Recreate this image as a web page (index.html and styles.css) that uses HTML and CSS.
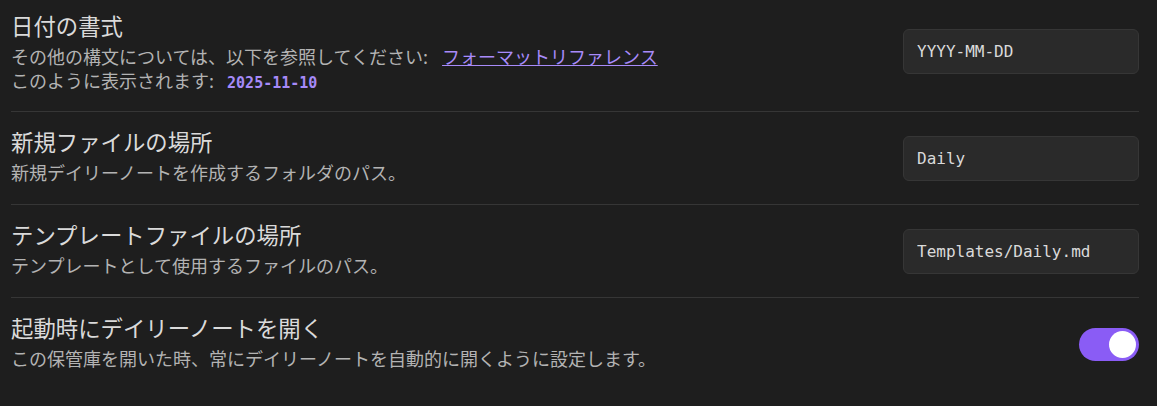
FILE: index.html
```html
<!DOCTYPE html>
<html lang="ja">
<head>
  <meta charset="UTF-8" />
  <meta name="viewport" content="width=device-width, initial-scale=1.0" />
  <title>デイリーノート設定</title>
  <link rel="stylesheet" href="styles.css">
</head>
<body>
  <div class="settings">
    <div class="setting-item">
      <div class="setting-info">
        <div class="setting-name">日付の書式</div>
        <div class="setting-desc">
          その他の構文については、以下を参照してください: <a href="#" class="link">フォーマットリファレンス</a><br>
          このように表示されます: <b class="preview">2025-11-10</b>
        </div>
      </div>
      <input type="text" class="text-input setting-control" value="YYYY-MM-DD" />
    </div>

    <div class="setting-item">
      <div class="setting-info">
        <div class="setting-name">新規ファイルの場所</div>
        <div class="setting-desc">新規デイリーノートを作成するフォルダのパス。</div>
      </div>
      <input type="text" class="text-input setting-control" value="Daily" />
    </div>

    <div class="setting-item">
      <div class="setting-info">
        <div class="setting-name">テンプレートファイルの場所</div>
        <div class="setting-desc">テンプレートとして使用するファイルのパス。</div>
      </div>
      <input type="text" class="text-input setting-control" value="Templates/Daily.md" />
    </div>

    <div class="setting-item">
      <div class="setting-info">
        <div class="setting-name">起動時にデイリーノートを開く</div>
        <div class="setting-desc">この保管庫を開いた時、常にデイリーノートを自動的に開くように設定します。</div>
      </div>
      <div class="toggle is-enabled setting-control"><span class="knob"></span></div>
    </div>
  </div>
</body>
</html>
```

FILE: styles.css
```css
body {
  margin: 0;
  background-color: #1e1e1e;
  color: #dadada;
  font-family: "Noto Sans CJK JP", "Noto Sans", sans-serif;
}

.settings {
  padding: 0 18px 0 11px;
}

.setting-item {
  display: flex;
  align-items: center;
  justify-content: space-between;
  padding: 14px 0 20px;
  border-top: 1px solid #363636;
}

.setting-item .setting-control {
  margin-top: 6px;
}

.setting-item:first-child {
  border-top: none;
  padding: 10px 0 19px;
}

.setting-item:first-child .setting-control {
  margin-top: 0;
}

.setting-name {
  font-size: 22.4px;
  line-height: 30px;
  margin-bottom: 4px;
}

.setting-desc {
  font-size: 18px;
  line-height: 24px;
  color: #b3b3b3;
}

.link {
  color: #a88bfa;
  text-decoration: underline;
  margin-left: 10px;
}

.preview {
  font-family: "DejaVu Sans Mono", "Liberation Mono", monospace;
  font-size: 15px;
  line-height: 1;
  color: #a68af9;
  margin-left: 9px;
}

.text-input {
  box-sizing: border-box;
  width: 236px;
  height: 45px;
  padding: 0 13px;
  background-color: #2a2a2a;
  border: 1px solid #363636;
  border-radius: 6px;
  color: #dadada;
  font-family: "DejaVu Sans Mono", "Liberation Mono", monospace;
  font-size: 16px;
  outline: none;
}

.toggle {
  box-sizing: border-box;
  width: 60px;
  height: 33px;
  border-radius: 17px;
  background-color: #3f3f3f;
  padding: 3px;
  display: flex;
}

.toggle.is-enabled {
  background-color: #8a5cf5;
  justify-content: flex-end;
}

.knob {
  width: 27px;
  height: 27px;
  border-radius: 50%;
  background-color: #fff;
}
```
